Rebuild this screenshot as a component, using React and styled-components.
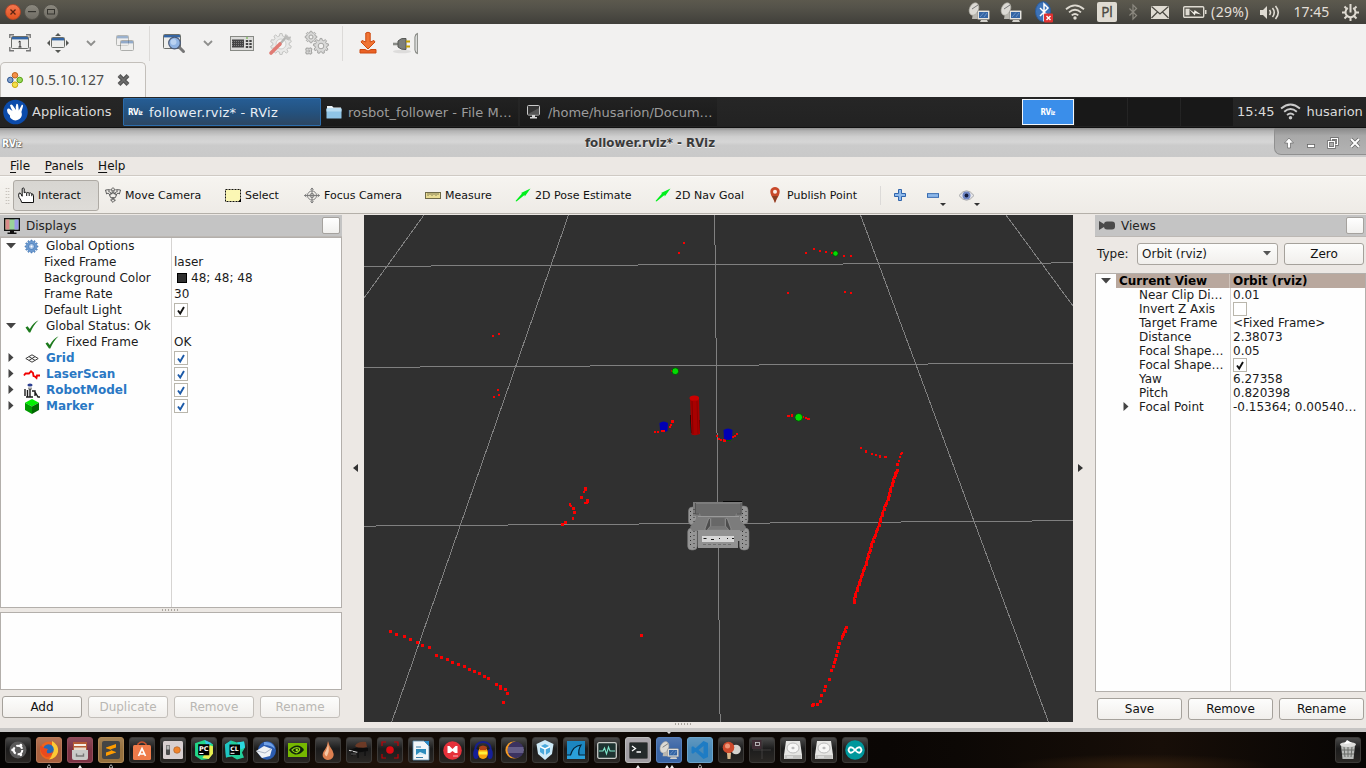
import React from 'react';
import styled, { createGlobalStyle, css } from 'styled-components';

const Global = createGlobalStyle`
  * { box-sizing: border-box; }
  html, body { margin: 0; padding: 0; background: #000; overflow: hidden; }
  body { font-family: "DejaVu Sans", "Liberation Sans", sans-serif; font-size: 12px; color: #1a1a1a; }
`;

const Screen = styled.div`
  width: 1366px; height: 768px; display: flex; flex-direction: column; overflow: hidden;
`;
const Icon = styled.svg`
  display: block; flex: none; overflow: visible;
`;
const Slot = styled.div`
  width: ${p => p.$w}px; height: 100%; flex: none; display: flex; align-items: center; justify-content: center;
`;

/* ---------- host system bar ---------- */
const SystemBar = styled.header`
  height: 24px; flex: none; display: flex; justify-content: space-between; overflow: hidden;
  background: linear-gradient(#5c594e 0, #55534a 30%, #403f3a 100%);
`;
const WindowDots = styled.div`
  display: flex; align-items: center; gap: 3px; padding: 0 0 1px 5px;
`;
const Dot = styled.span`
  width: 16px; height: 16px; border-radius: 50%; display: flex; align-items: center; justify-content: center;
  border: 1px solid ${p => (p.$close ? '#b3482a' : '#54524a')};
  background: ${p => (p.$close ? 'linear-gradient(#f4774f, #e2531f)' : 'linear-gradient(#8b887e, #6f6c64)')};
`;
const Tray = styled.div`
  display: flex; height: 24px; width: 403px; flex: none; font: 14px "Noto Sans", sans-serif; color: #e3dfd7;
`;
const TrayText = styled.span`
  letter-spacing: ${p => p.$ls || 0}px; white-space: nowrap; padding-bottom: 1px;
`;
const Layout = styled.span`
  width: 20px; height: 20px; border-radius: 2px; background: #dfdbd2; color: #4b4942;
  font: 13.5px/20px "Noto Sans", sans-serif; text-align: center; -webkit-text-stroke: 0.3px #4b4942;
`;

/* ---------- remote client chrome ---------- */
const ClientBar = styled.div`
  height: 38px; flex: none; display: flex; align-items: center; background: #f2f1f0; padding-left: 1px;
`;
const Rule = styled.span`
  width: 1px; height: ${p => p.$h || 35}px; background: #dcdad8; margin: 0 ${p => p.$r}px 0 ${p => p.$l}px; flex: none;
`;
const ClientTabs = styled.div`
  height: 35px; flex: none; background: #f2f1f0; display: flex;
`;
const ClientTab = styled.div`
  width: 146px; height: 35px; border: 1px solid #c3bfba; border-bottom: 0; border-radius: 5px 5px 0 0;
  background: #f5f4f3; display: flex; align-items: center; padding: 0 0 1px 6px;
  font: 14px "Noto Sans", sans-serif; color: #4c4c4c;
  span { width: 76px; margin: 0 13px 1px 5px; letter-spacing: 0.08px; }
`;

/* ---------- remote desktop panel ---------- */
const Panel = styled.div`
  height: 31px; flex: none; display: flex; align-items: center; background: linear-gradient(#262626, #222);
  font-size: 13px; color: #dadada; border-bottom: 1px solid #111;
`;
const Launcher = styled.div`
  display: flex; align-items: center; gap: 4px; width: 123px; padding: 0 0 2px 3px;
`;
const Task = styled.div`
  width: ${p => (p.$active ? 198 : 197)}px; height: 28px; display: flex; align-items: center; flex: none;
  padding-left: 5px; gap: 6px; margin-right: ${p => p.$mr || 0}px; white-space: nowrap;
  ${p => p.$active ? css`
    background: linear-gradient(#265d94, #24527f 50%, #2c4662); border: 1px solid #2b6cab; color: #e8eef4; border-radius: 1px;
    padding-left: 4px; letter-spacing: 0.19px;
  ` : css`background: linear-gradient(#222, #191919); color: #9c9c9c;`}
`;
const TaskLabel = styled.span`
  letter-spacing: ${p => p.$ls}px;
`;
const RvizMark = styled.span`
  font: bold ${p => p.$s || 8}px "DejaVu Sans Condensed", "DejaVu Sans", sans-serif; letter-spacing: -0.5px;
  color: #fff; width: ${p => p.$w || 15}px; flex: none; white-space: nowrap;
  text-shadow: ${p => (p.$outline ? '0 0 1px #555, 0 0 1px #666, 1px 1px 1px #777' : 'none')};
  small { font-size: 0.78em; }
`;
const Pager = styled.div`
  display: flex; height: 28px; margin-left: auto; align-items: center;
`;
const Workspace = styled.div`
  width: 52px; height: ${p => (p.$active ? 26 : 28)}px; margin-right: 1px; flex: none;
  display: flex; align-items: center; justify-content: center;
  background: ${p => (p.$active ? '#3a8eea' : '#181818')};
  border: ${p => (p.$active ? '1px solid #f2f6fa' : '0')};
`;
const PanelStatus = styled.div`
  width: 132px; display: flex; align-items: center; padding: 0 0 1px 3px; gap: 5.5px; flex: none;
`;

/* ---------- RViz window ---------- */
const TitleBar = styled.div`
  height: 29px; flex: none; display: flex; align-items: center;
  background: linear-gradient(#8f8f8f 0, #b3b3b3 10%, #cfcfcf 30%, #d6d6d6 48%, #cbcbcb 60%, #c9c9c9 100%);
  padding-left: 2px;
`;
const TitleText = styled.span`
  flex: 1; text-align: center; font-weight: bold; font-size: 11.85px; color: #3a3a3a; padding-left: 4px;
  text-shadow: 0 1px 0 #eee;
`;
const TitleButtons = styled.div`
  width: 92px; height: 27px; align-self: flex-start; border-radius: 0 0 0 7px; flex: none;
  border: 1px solid #909090; border-width: 0 0 1px 1px; background: linear-gradient(#888, #a9a9a9 30%, #b3b3b3);
  display: flex; align-items: center; padding: 4px 0 0 3px;
`;
const MenuBar = styled.div`
  height: 19px; flex: none; display: flex; align-items: center; gap: 14.7px; padding: 0 0 1px 10px; background: #ece8e4;
  border-bottom: 1px solid #cfcac4; color: #111;
  span::first-letter { text-decoration: underline; text-underline-offset: 2px; }
`;
const ToolBar = styled.div`
  height: 38px; flex: none; display: flex; align-items: center; background: linear-gradient(#f6f4f0, #eeebe6);
  border-bottom: 1px solid #b4b0a9; border-top: 1px solid #fbfaf8; font-size: 11px; color: #111;
`;
const Grip = styled.span`
  width: 5px; height: 17px; margin: 0 3px 0 5px; flex: none;
  background: radial-gradient(circle, #bdb8b1 35%, transparent 45%) 0 0 / 2.5px 3px;
`;
const Tool = styled.div`
  width: ${p => p.$w}px; height: 31px; display: flex; align-items: center; gap: 4px; flex: none; white-space: nowrap;
  padding-left: ${p => (p.$on ? 4 : 6)}px;
  ${p => p.$on && css`background: linear-gradient(#d7d5d1, #dedcd8); border: 1px solid #aeaaa4; border-radius: 3px;`}
`;
const Workarea = styled.div`
  height: 514px; flex: none; display: flex; background: #ece8e4; padding-top: 1px;
`;
const LeftDock = styled.section`
  width: 342px; flex: none; display: flex; flex-direction: column;
`;
const RightDock = styled.section`
  width: 271px; flex: none; display: flex; flex-direction: column;
`;
const DockHeader = styled.div`
  height: 22px; flex: none; background: #c4c4c4; display: flex; align-items: center; padding: 0 2px 0 4px;
  gap: 6px; color: #222; border-bottom: 1px solid #bcb8b4;
  i { margin-left: auto; width: 18px; height: 17px; border: 1px solid #a5a29e; border-radius: 2px; background: linear-gradient(#fff, #f1f0ee); }
`;
const Tree = styled.div`
  height: ${p => p.$h}px; flex: none; border: 1px solid #b3afab; display: flex; flex-direction: column;
  background: linear-gradient(#d6d4d2, #d6d4d2) ${p => p.$split}px 0 / 1px 100% no-repeat #fefefe;
`;
const Row = styled.div`
  height: ${p => p.$h}px; flex: none; display: flex; align-items: center;
  color: #1b1b1b; white-space: nowrap;
`;
const NameCell = styled.div`
  width: ${p => p.$w}px; height: 100%; display: flex; align-items: center; flex: none;
  padding-left: ${p => p.$indent || 0}px;
  font-weight: ${p => (p.$bold ? 'bold' : 'normal')}; color: ${p => p.$color || 'inherit'};
`;
const ValueCell = styled.div`
  display: flex; align-items: center; height: 100%; flex: 1; padding-left: 2px; gap: 4px;
`;
const Highlight = styled.div`
  flex: 1; height: 100%; display: flex; align-items: center; background: #b9a89e; color: #000; font-weight: bold;
  span { width: 114px; padding-left: 3px; border-right: 1px solid #cfc4bc; height: 100%; line-height: 14px; }
  b { padding-left: 3px; line-height: 14px; }
`;
const Box = styled.span`
  width: 14px; height: 14px; border: 1px solid #b9b6ac; background: #fff; display: flex; align-items: center; justify-content: center; flex: none;
`;
const Swatch = styled.span`
  width: 10px; height: 10px; background: #303030; border: 1px solid #000; margin-left: 3px;
`;
const SplitHandle = styled.div`
  height: 4px; flex: none; display: flex; justify-content: center; align-items: center;
  padding-right: ${p => p.$shift || 0}px;
  span { width: 18px; height: 2px; background: repeating-linear-gradient(90deg, #aaa69f 0 1px, transparent 1px 3px); }
`;
const HelpBox = styled.div`
  height: 78px; flex: none; background: #fefefe; border: 1px solid #b3afab;
`;
const Buttons = styled.div`
  display: flex; gap: 6px; padding: 6px 2px 0 2px;
`;
const Button = styled.div`
  flex: ${p => (p.$w ? 'none' : 1)}; width: ${p => (p.$w ? p.$w + 'px' : 'auto')}; height: 22px; border: 1px solid ${p => (p.$off ? '#c3bfba' : '#a5a19b')}; border-radius: 3px;
  background: linear-gradient(#fdfdfc, #f1efec); color: ${p => (p.$off ? '#b9b7b3' : '#111')};
  display: flex; align-items: center; justify-content: center; padding-bottom: 1px;
`;
const TypeRow = styled.div`
  display: flex; align-items: center; gap: 6px; height: 22px; margin: 6px 2px 8px 2px; flex: none;
  > span { width: 34px; }
`;
const Select = styled.div`
  width: 141px; height: 22px; border: 1px solid #a9a59f; border-radius: 3px; background: linear-gradient(#fdfdfc, #f1efec);
  display: flex; align-items: center; justify-content: space-between; padding: 0 6px 1px 4px;
`;
const Collapse = styled.div`
  width: 22px; flex: none; display: flex; align-items: center; justify-content: center;
  padding: 0 ${p => p.$r}px 7px ${p => p.$l}px;
`;
const Center = styled.main`
  width: 709px; flex: none; display: flex; flex-direction: column; overflow: hidden;
`;
const WindowEdge = styled.div`
  height: 4px; flex: none; background: #c6c5c4;
`;

/* ---------- host dock ---------- */
const HostDock = styled.footer`
  height: 36px; flex: none; display: flex; align-items: flex-start; padding: 0 0 0 5px; gap: 5px;
  background:
    radial-gradient(ellipse 130px 12px at 1140px 34px, #33200f, transparent),
    radial-gradient(ellipse 160px 16px at 420px 30px, #23150c, transparent),
    linear-gradient(90deg, #050403, #120b06 30%, #0a0604 65%, #0c0805 70%, #170e08 85%, #070504);
  > :last-child { margin-left: auto; margin-right: 5px; }
`;
const DockItem = styled.div`
  width: 26px; height: 36px; flex: none; display: flex; flex-direction: column; align-items: center;
`;
const Tile = styled.div`
  width: 26px; height: 26px; flex: none; border-radius: 3px; display: flex; align-items: center; justify-content: center;
  background: ${p => p.$c ? `linear-gradient(rgba(255,255,255,.12), transparent 50%), ${p.$c}` : 'linear-gradient(#4a4a4a, #1c1c1c 45%, #2a2724)'};
  border: 1px solid ${p => p.$b || '#3c3a38'};
`;
const Mark = styled.div`
  height: 5px; display: flex; gap: 1px; justify-content: center; align-items: ${p => (p.$top ? 'flex-start' : 'flex-end')};
`;

/* ---------- icons ---------- */
const Remote = ({ s = 22 }) => (
  <Icon width={s} height={s} viewBox="0 0 22 22">
    <path d="M5 12 L10 12 L12 18 L4 18 Z" fill="#b9b7b0" />
    <ellipse cx="6" cy="8" rx="4.5" ry="6.5" fill="#dcdad4" stroke="#aaa89f" strokeWidth=".6" transform="rotate(24 6 8)" />
    <path d="M4 8 L10 4" stroke="#777" />
    <rect x="9.5" y="9.5" width="12" height="9" rx="1" fill="#e6e4df" stroke="#8c8a84" strokeWidth=".6" />
    <rect x="11" y="11" width="9" height="6" fill="#3465a4" />
    <path d="M12 16 L16 11.5 M16 16 L19 12" stroke="#7fa3d3" strokeWidth=".7" />
    <path d="M13 19 h6 l1 2 h-8 z" fill="#d4d2cc" />
  </Icon>
);
const Wifi = ({ w = 20, c = '#dfdbd2' }) => (
  <Icon width={w} height={w * 0.8} viewBox="0 0 20 16" fill="none" stroke={c} strokeWidth="1.8">
    <path d="M1 5.2 Q10 -2.4 19 5.2" /><path d="M4 8.4 Q10 3.2 16 8.4" /><path d="M6.7 11.4 Q10 8.6 13.3 11.4" />
    <circle cx="10" cy="14" r="1.7" fill={c} stroke="none" />
  </Icon>
);
const BtPath = ({ c, w }) => <path d="M5 7 L13 15 L9 19 L9 3 L13 7 L5 15" fill="none" stroke={c} strokeWidth={w} />;
const Chevron = () => (
  <Icon width="10" height="6" viewBox="0 0 10 6"><path d="M1 1 L5 5 L9 1" fill="none" stroke="#8e8e8c" strokeWidth="1.8" /></Icon>
);
const Win = ({ x, y, w, h, o = 1 }) => (
  <g opacity={o}>
    <rect x={x + 0.5} y={y + 0.5} width={w - 1} height={h - 1} rx="1" fill="#eeeeec" stroke="#6b6e6a" />
    <rect x={x + 1} y={y + 1} width={w - 2} height="2.4" fill="#3465a4" />
  </g>
);
const gearPath = (cx, cy, r, n) => {
  let d = '';
  for (let i = 0; i < n; i++) {
    [[-0.3, 0.78], [-0.17, 1], [0.17, 1], [0.3, 0.78]].forEach(([a, k], j) => {
      const t = ((i + a) / n) * Math.PI * 2;
      d += `${i || j ? 'L' : 'M'}${(cx + Math.sin(t) * r * k).toFixed(2)} ${(cy - Math.cos(t) * r * k).toFixed(2)} `;
    });
  }
  return d + 'Z';
};
const Tri = ({ open }) => open
  ? <Icon width="10" height="6" viewBox="0 0 10 6"><path d="M0 0 H10 L5 5.5 Z" fill="#444" /></Icon>
  : <Icon width="6" height="10" viewBox="0 0 6 10"><path d="M.5 0 V9 L5.5 4.5 Z" fill="#444" /></Icon>;
const Check = ({ c }) => (
  <Box>{c && <Icon width="8" height="9" viewBox="0 0 8 9"><path d="M1 4.5 L3.2 7.5 L7 1" fill="none" stroke={c} strokeWidth="1.9" /></Icon>}</Box>
);
const Tick = () => (
  <Icon width="14" height="13" viewBox="0 0 14 13"><path d="M0.5 7.5 L2.5 6.2 L4.8 9 Q8 3 13.5 0.3 Q8.5 5 5.3 12.6 L4 12.6 Z" fill="#1d7a1d" /></Icon>
);
const Pose = () => (
  <Icon width="16" height="14" viewBox="0 0 16 14"><path d="M0.5 13 L7 5.5 L6 5 L15.5 .5 L9.8 8.5 L9.5 7 L1.5 13.6 Z" fill="#00ef1c" /></Icon>
);
const Disk = () => (
  <Icon width="20" height="20" viewBox="0 0 20 20">
    <path d="M3 1 H17 L19 15 V19 H1 V15 Z" fill="#e6e6e4" /><path d="M1.5 15 H18.5 V19 H1.5Z" fill="#c4c4c2" />
    <ellipse cx="10" cy="8" rx="6" ry="5" fill="#f7f7f6" stroke="#bbb" /><ellipse cx="10" cy="8" rx="1.6" ry="1.2" fill="#bbb" /><path d="M4 17h6" stroke="#eee" />
  </Icon>
);

/* ---------- 3D scene ---------- */
const dot3 = [
  [390, 631], [396, 634], [404, 636], [410, 639], [417, 642], [422, 645], [429, 647], [436, 655], [441, 657], [447, 659],
  [452, 662], [458, 664], [464, 666], [469, 669], [474, 671], [479, 673], [484, 676], [488, 678], [496, 684], [500, 686],
  [500, 688], [505, 689], [507, 693], [503, 702], [641, 635], [897, 470], [897, 464], [839, 643], [838, 647], [837, 651], [836, 655],
  [835, 659], [834, 662], [833, 666], [831, 670], [829, 679], [825, 686], [824, 690], [821, 695], [820, 701], [817, 704],
  [813, 704], [812, 705], [585, 488], [585, 489], [581, 497], [587, 500], [587, 501], [573, 508], [574, 512], [565, 522],
  [562, 524], [672, 421], [724, 440],
];
const dot2 = [
  [902, 453], [901, 454], [900, 457], [899, 461], [861, 448], [866, 451], [866, 452], [872, 454], [876, 455], [880, 456], [880, 457],
  [885, 457], [886, 457], [806, 253], [814, 249], [820, 251], [826, 252], [844, 256], [851, 256], [788, 293], [845, 292], [851, 293],
  [788, 416], [789, 416], [792, 415], [792, 416], [803, 417], [806, 418], [808, 419], [809, 419], [684, 243], [679, 253], [493, 336], [499, 334],
  [498, 390], [494, 397], [499, 395], [655, 432], [658, 432], [662, 431], [664, 430], [670, 427], [671, 425], [717, 436],
  [719, 439], [721, 440], [733, 437], [735, 436], [737, 434], [584, 492], [573, 518], [573, 519], [672, 371], [678, 371],
  [832, 253], [585, 503], [587, 503], [570, 504], [570, 505], [571, 506],
];
const wall = [[[896.5, 472], [892, 485], [888, 499], [884, 509], [879, 525], [873, 541], [866, 564], [859, 584], [855, 596], [854, 602]], [[846, 627], [845, 631], [842, 638]]];
const wallDots = wall.flatMap(line => line.slice(1).flatMap(([x2, y2], i) => {
  const [x1, y1] = line[i];
  const n = Math.ceil((y2 - y1) / 2);
  return Array.from({ length: n + 1 }, (_, k) => [Math.floor(x1 + ((x2 - x1) * k) / n), Math.floor(y1 + ((y2 - y1) * k) / n), k % 3 === 1 ? 2 : 3]);
}));
const gridLines = [
  [364, 266.33, 1073, 262.9], [364, 367.34, 1073, 363.15], [364, 526.1, 1073, 520.7], [714.7, 215, 720.1, 722],
  [568.5, 215, 391.7, 722], [424, 215, 364, 298], [860.5, 215, 1048.5, 722], [1006, 215, 1073, 306],
];
const Scene = () => (
  <Icon width="709" height="507" viewBox="364 215 709 507">
    <rect x="364" y="215" width="709" height="507" fill="#303030" />
    <g stroke="#808080" strokeWidth="1" shapeRendering="crispEdges">
      {gridLines.map(([a, b, c, d], i) => <line key={i} x1={a} y1={b} x2={c} y2={d} />)}
    </g>
    <g fill="#fb0000" shapeRendering="crispEdges">
      {dot3.map(([x, y], i) => <rect key={i} x={x - 1} y={y - 1} width="3" height="3" />)}
      {wallDots.map(([x, y, w], i) => <rect key={i} x={x - 1} y={y - 1} width={w} height="3" />)}
      {dot2.map(([x, y], i) => <rect key={i} x={x - 1} y={y - 1} width="2" height="2" />)}
    </g>
    <path d="M690 415 h2 v18 h-1z M699 420 h1 v14 h-1z" fill="#150000" />
    <path d="M690 398 H699 L700 434 Q695.5 436 691.5 434.5 Z" fill="#a90000" />
    <path d="M692 401 L693 434" stroke="#840000" strokeWidth="1" />
    <path d="M697 401 L698 434" stroke="#900000" strokeWidth="1" />
    <ellipse cx="694.3" cy="398" rx="4.8" ry="2.6" fill="#cc0000" />
    <path d="M659.5 423 Q663.5 420 668 423 L667.5 431 Q664 433 660 430 Z" fill="#0000b4" />
    <path d="M723.5 430 Q728 427 732.5 430 L732 439 Q728 441 724 439 Z" fill="#0000b4" />
    <path d="M726 440.5 h5" stroke="#006000" /><rect x="661" y="430" width="4" height="2" fill="#fb0000" />
    <g fill="#02dc02" stroke="#064006" strokeWidth=".8">
      <circle cx="675.3" cy="371.2" r="3.4" /><circle cx="798.7" cy="417.3" r="3.9" /><circle cx="835.5" cy="253.5" r="2.7" />
    </g>
    <g>
      <g fill="#969696" stroke="#7b7b7b" strokeWidth=".6">
        <rect x="688.5" y="507" width="9" height="18" rx="4" /><rect x="739" y="506" width="9" height="18" rx="4" />
        <rect x="687.7" y="528" width="9.5" height="22" rx="4" /><rect x="739.5" y="528" width="9.5" height="22" rx="4" />
      </g>
      <path d="M723 501.5 H742" stroke="#080808" />
      <path d="M693 502 H742.3 V516 H740 V520 L746 527 L744 531 H692 L690 527 L696 519 V516 H693 Z" fill="#7c7c7c" />
      <path d="M696 504 H740.5 V513.5 H736 L735 516 H701 L700 513.5 H696 Z" fill="#6b6b6b" />
      <path d="M695.5 503 V514 H699 M741 503 V514 H737" fill="none" stroke="#4a4a4a" strokeWidth=".8" />
      <path d="M698 516.5 H739" stroke="#a2a2a2" strokeWidth=".8" />
      <path d="M710 517 H726 L729 529 H707 Z" fill="#777" />
      <path d="M709 518 L710.5 519 V526 L706 531.5 L705 529 Z M727 518 L725.5 519 V526 L730 531.5 L731 529 Z" fill="#4d4d4d" stroke="#a0a0a0" strokeWidth=".6" />
      <rect x="711.5" y="518" width="13" height="8" fill="#686868" />
      <path d="M698 530 H740 V541 H738 V548 H698 Z" fill="#929292" />
      <rect x="702" y="536" width="32" height="6" fill="#d6d6d6" />
      <path d="M703.5 538.5h3 M711 539.5h3 M719 538.5h1 M727 538.5h1 M732 538.5h2" stroke="#1c1c1c" />
      <path d="M703 544.5 H733" stroke="#6e6e6e" strokeDasharray="3 2" />
      <path d="M690.5 511v12 M694 509v14 M742.5 509v14 M746 511v10 M690.5 532v16 M694 531v18 M742.5 531v18 M746 532v16" stroke="#2e2e2e" strokeDasharray="1 3" />
    </g>
  </Icon>
);

/* ---------- data ---------- */
const displayRows = [
  { tri: 'open', icon: 'gear', name: 'Global Options' },
  { indent: 43, name: 'Fixed Frame', value: 'laser' },
  { indent: 43, name: 'Background Color', value: '48; 48; 48', swatch: true },
  { indent: 43, name: 'Frame Rate', value: '30' },
  { indent: 43, name: 'Default Light', check: '#111' },
  { tri: 'open', icon: 'tick', name: 'Global Status: Ok' },
  { indent: 44, icon: 'tick', name: 'Fixed Frame', value: 'OK' },
  { tri: 'shut', icon: 'grid', name: 'Grid', link: true, check: '#1c5aa8' },
  { tri: 'shut', icon: 'laser', name: 'LaserScan', link: true, check: '#1c5aa8' },
  { tri: 'shut', icon: 'robot', name: 'RobotModel', link: true, check: '#1c5aa8' },
  { tri: 'shut', icon: 'marker', name: 'Marker', link: true, check: '#1c5aa8' },
];
const viewRows = [
  ['Near Clip Di…', '0.01'], ['Invert Z Axis', { check: null }], ['Target Frame', '<Fixed Frame>'], ['Distance', '2.38073'],
  ['Focal Shape…', '0.05'], ['Focal Shape…', { check: '#111' }], ['Yaw', '6.27358'], ['Pitch', '0.820398'],
  ['Focal Point', '-0.15364; 0.00540…', true],
];
const rowIcons = {
  gear: <Icon width="13" height="13" viewBox="0 0 13 13"><path d={gearPath(6.5, 6.5, 6.5, 12)} fill="#6c9bd2" stroke="#3a6fae" strokeWidth=".6" /><circle cx="6.5" cy="6.5" r="3" fill="#a9c5e8" stroke="#3a6fae" strokeWidth=".7" /><circle cx="6.5" cy="6.5" r="1" fill="#fff" /></Icon>,
  tick: <Tick />,
  grid: <Icon width="14" height="9" viewBox="0 0 14 9" fill="none" stroke="#3c3c3c"><path d="M.8 4.5 L7 .8 L13.2 4.5 L7 8.2 Z M3.9 2.6 L10.1 6.4 M10.1 2.6 L3.9 6.4" /></Icon>,
  laser: <Icon width="16" height="9" viewBox="0 0 16 9"><path d="M0 5.5 L1.5 3.5 H5 L7 1.2 L9 3 L9.5 6 L11 6.5 L12.5 8 L13 5.5 H16" fill="none" stroke="#f00000" strokeWidth="1.8" /></Icon>,
  robot: <Icon width="16" height="15" viewBox="0 0 16 15"><ellipse cx="6" cy="2" rx="2.6" ry="1.5" fill="#2c3f8f" /><path d="M4 4.5 h4 v2 h-4z" fill="#9a9a9a" /><path d="M1 6 V13 M3.5 7 V14 M6 6 V14 M8 8 H11 V13 M11 9 L14 14 H16 M2 14 H9" fill="none" stroke="#1c1c1c" strokeWidth="1.4" /></Icon>,
  marker: <Icon width="14" height="15" viewBox="0 0 14 15"><path d="M7 0 L14 3.8 L7 7.6 L0 3.8Z" fill="#00f000" /><path d="M0 3.8 L7 7.6 V15 L0 11Z" fill="#009a00" /><path d="M14 3.8 L7 7.6 V15 L14 11Z" fill="#006800" /></Icon>,
};

const DisplayRow = ({ r }) => (
  <Row $h={16}>
    <NameCell $w={171} $indent={r.indent} $bold={r.link} $color={r.link ? '#2a78c4' : undefined}>
      {r.tri && <Slot $w={19}><Tri open={r.tri === 'open'} /></Slot>}
      {r.icon && <Slot $w={r.tri ? 23 : 14}>{rowIcons[r.icon]}</Slot>}
      {r.icon && <Slot $w={r.tri ? 3 : 7} />}
      {r.name}
    </NameCell>
    <ValueCell>
      {r.swatch && <Swatch />}
      {r.check && <Check c={r.check} />}
      {r.value}
    </ValueCell>
  </Row>
);

const MoveIcon = () => (
  <Icon width="16" height="16" viewBox="0 0 16 16" fill="none" stroke="#4d4d4d" strokeWidth=".9">
    <path d="M8 .6 L10.4 3 H8.8 V6 M8 .6 L5.6 3 H7.2 V6 M8 15.4 L10.4 13 H8.8 V10 M8 15.4 L5.6 13 H7.2 V10" />
    <path d="M.5 3 L4.5 2.6 L3.6 4.4 Q6 5 6.6 7.4 M.5 3 L1.6 7 L3 6 Q4.5 6.5 4.8 8.6 M15.5 3 L11.5 2.6 L12.4 4.4 Q10 5 9.4 7.4 M15.5 3 L14.4 7 L13 6 Q11.5 6.5 11.2 8.6" />
    <ellipse cx="8" cy="8.6" rx="3.2" ry="2.6" />
  </Icon>
);
const tools = [
  ['Interact', 86, <Icon width="16" height="17" viewBox="0 0 16 17"><path d="M4.2 9 V1.6 Q5.2 .2 6.2 1.6 V5.8 Q7.3 4.6 8.6 6 Q9.9 4.9 11.1 6.2 Q12.5 5.3 13.8 6.8 Q15.5 6.8 15.5 8.8 V15.5 H3.7 Q3.2 13 1 10.4 Q.1 8.2 1.2 6 Q2.4 5.8 3 7 L4.2 9.5 M8.7 6.2 V9 M11.2 6.5 V9 M13.8 7 V9.2" fill="#fff" stroke="#111" strokeWidth="1" /></Icon>, true],
  ['Move Camera', 120, <MoveIcon />],
  ['Select', 79, <Icon width="16" height="14" viewBox="0 0 16 14"><rect x=".5" y="1.5" width="15" height="12" fill="#fbf7b4" stroke="#111" strokeDasharray="2 1" /><path d="M13 14 H16 V10.5 Z" fill="#000" /></Icon>],
  ['Focus Camera', 121, <Icon width="16" height="17" viewBox="0 0 17 17" fill="none" stroke="#777" strokeWidth="1"><circle cx="8.5" cy="8.5" r="4.8" /><circle cx="8.5" cy="8.5" r="2.2" /><path d="M8.5 .5 V16.5 M.5 8.5 H16.5 M7 2.5 L8.5 .5 L10 2.5 M7 14.5 L8.5 16.5 L10 14.5 M2.5 7 L.5 8.5 L2.5 10 M14.5 7 L16.5 8.5 L14.5 10" /></Icon>],
  ['Measure', 90, <Icon width="16" height="7" viewBox="0 0 16 7"><rect x=".5" y=".5" width="15" height="6" fill="#e9dc94" stroke="#6f6a48" /><path d="M3 1v3M5 1v2M7 1v3M9 1v2M11 1v3M13 1v2" stroke="#6f6a48" strokeWidth=".8" /></Icon>],
  ['2D Pose Estimate', 140, <Pose />],
  ['2D Nav Goal', 112, <Pose />],
  ['Publish Point', 118, <Icon width="16" height="16" viewBox="0 0 16 16"><path d="M8 16 Q6.5 12 4.2 8.5 Q2 3 5 1 Q8 -1 11 1 Q14 3 11.8 8.5 Q9.5 12 8 16Z" fill="#c8492a" /><path d="M8 16 Q7 12 5 9 L11 9 Q9 12 8 16Z" fill="#6b3a22" opacity=".7" /><circle cx="8" cy="4.8" r="2" fill="#fbeee8" /></Icon>],
];
const DropMark = () => <Icon width="6" height="3" viewBox="0 0 6 3"><path d="M0 0H6L3 3Z" fill="#333" /></Icon>;
const WithDrop = styled.div`
  width: ${p => p.$w}px; display: flex; align-items: center;
  > :last-child { margin: 19px 0 0 ${p => p.$d}px; }
`;

const circleMark = <Icon width="4" height="4" viewBox="0 0 4 4"><path d="M2 .6 L3.4 2.4 V4 H.6 V2.4Z" fill="none" stroke="#ddd" strokeWidth=".8" /></Icon>;
const solidMark = <Icon width="4" height="3" viewBox="0 0 4 3"><path d="M2 0 L4 3 H0Z" fill="#eee" /></Icon>;

const dockIcons = [
  [<Icon width="18" height="18" viewBox="0 0 18 18"><circle cx="9" cy="9" r="8.5" fill="#5a5a5a" /><circle cx="9" cy="9" r="4.3" fill="none" stroke="#fff" strokeWidth="2" strokeDasharray="7 2" /><circle cx="3.6" cy="9" r="1.4" fill="#fff" /><circle cx="11.8" cy="4.2" r="1.4" fill="#fff" /><circle cx="11.8" cy="13.8" r="1.4" fill="#fff" /></Icon>],
  [<Icon width="20" height="20" viewBox="0 0 20 20"><circle cx="10" cy="10.5" r="9" fill="#f0631b" /><path d="M13 1 Q20 5 19 12 Q17 19 10 19.5 Q15 15 13 8Z" fill="#fcca35" /><circle cx="9.5" cy="9.5" r="5.3" fill="#2569b8" /><path d="M1 6 Q4 6 5 8 L9 9 Q7 11 8 13 Q12 14 14 11 Q13 17 7 17 Q1 14 1 6Z" fill="#ea4a1f" /></Icon>, '#a9613f', '#b77a5a', circleMark],
  [<Icon width="18" height="19" viewBox="0 0 18 19"><path d="M2 1 H16 V9 H2Z" fill="#b55c35" /><path d="M3 3 H15 V5 H3Z" fill="#f5efe4" /><path d="M3 6.5 H15 V9 H3Z" fill="#e8dccb" /><path d="M1 9 H17 V17 Q17 19 15 19 H3 Q1 19 1 17Z" fill="#c9c9c7" /><path d="M5.5 12.5 V15 H12.5 V12.5" fill="none" stroke="#777" strokeWidth="1.4" /></Icon>, '#7d3344', '#914c5b', solidMark],
  [<Icon width="18" height="18" viewBox="0 0 18 18"><rect width="18" height="18" rx="2" fill="#454545" /><path d="M4 6.5 L14 3 V6.5 L7.5 8.8 L14 11 V11.5 L4 15 V11.5 L10.5 9.3 L4 7.2Z" fill="#ff9c00" /></Icon>, '#97713e', '#ae8856', circleMark],
  [<Icon width="18" height="19" viewBox="0 0 18 19"><path d="M5 5 V3 Q9 -1 13 3 V5" fill="none" stroke="#c9522c" strokeWidth="1.5" /><rect y="4" width="18" height="15" rx="1.5" fill="#ef7b4a" /><path d="M5.5 15 L9 7.5 L12.5 15 M7 13 H11" fill="none" stroke="#fff" strokeWidth="1.7" /></Icon>],
  [<Icon width="20" height="18" viewBox="0 0 20 18"><rect width="20" height="18" rx="1.5" fill="#d8cfd0" /><rect x="3" y="4" width="4" height="10" rx="1" fill="#4a4a4a" /><rect x="3.5" y="4.5" width="3" height="4" fill="#b8b8b8" /><circle cx="14" cy="9" r="3.3" fill="#f0822a" stroke="#9c5a2a" strokeWidth=".6" /></Icon>],
  [<Icon width="20" height="20" viewBox="0 0 19 19"><path d="M1 3 L10 0 L18 4 L18 12 L14 18 L7 19 L1 15Z" fill="#21d789" /><path d="M10 0 L17 3 L12 6Z" fill="#35c8e8" /><path d="M15 5 L18 6 V13 L14 18 L8 17Z" fill="#e9ef50" /><rect x="4" y="4" width="10.5" height="10.5" fill="#000" /><text x="4.7" y="10" fill="#fff" fontSize="6.2" fontWeight="bold" fontFamily="DejaVu Sans">PC</text><path d="M5 12.8h4" stroke="#fff" /></Icon>],
  [<Icon width="20" height="20" viewBox="0 0 20 19"><path d="M0 4 L6 0 L12 2 L19 1 L20 7 L17 12 L19 17 L12 19 L7 16 L1 17Z" fill="#23cf9b" /><path d="M0 4 L6 0 L7 14 L1 17Z" fill="#1fc4c4" /><path d="M12 2 L19 1 L20 7 L16 9Z" fill="#2bd8e0" /><rect x="4.5" y="4" width="10.5" height="10.5" fill="#000" /><text x="5.2" y="10" fill="#fff" fontSize="6.2" fontWeight="bold" fontFamily="DejaVu Sans">CL</text><path d="M5.5 12.8h4" stroke="#fff" /></Icon>],
  [<Icon width="20" height="19" viewBox="0 0 20 19"><ellipse cx="11" cy="9.5" rx="9" ry="9.3" fill="#2b5cb0" /><path d="M0 10 L8 5 L16 8 L14 15 L6 17Z" fill="#eef1f5" /><path d="M1 10 L9 12 L15 8" fill="none" stroke="#aab4c4" /><path d="M8 1 Q17 0 19 8 Q15 4 8 4Z" fill="#6fa0e6" /></Icon>],
  [<Icon width="19" height="14" viewBox="0 0 19 14"><rect width="19" height="14" fill="#76b900" /><path d="M1 7 Q5 2 10 2.5 Q14 3 16 7 Q12 12 7 11.5 Q3 10.5 1 7Z" fill="#10250a" /><path d="M4 7 Q7 3.5 11 5 Q13 7 9 9.5 Q6 10 4 7Z" fill="none" stroke="#8fd014" strokeWidth="1.3" /><circle cx="8.8" cy="7" r="1.2" fill="#9be020" /></Icon>],
  [<Icon width="12" height="19" viewBox="0 0 12 19"><path d="M6 0 Q7 5 10.5 9.5 Q13.5 16 8.5 18.5 Q3 20 .8 15.5 Q0 12 3 8.5 Q5.5 5 6 0Z" fill="#dd8050" /><path d="M6 3 Q5 9 2.5 12 Q3 16 5 15 Q8 10 6 3Z" fill="#f6c7a4" /></Icon>],
  [<Icon width="20" height="18" viewBox="0 0 20 18"><path d="M6 5 Q9 0 17 1 L18 6 Q12 8 9 7Z" fill="#6c3a26" /><path d="M0 9 L8 6.5 L19 7 V10 L9 11.5Z" fill="#0c0c0c" /><path d="M0 9.3 L9 11.5" stroke="#ddd" /><path d="M3 10 V15 M9 11 V17 M16 10 V15" stroke="#111" strokeWidth="1.4" /><path d="M2 13 h5" stroke="#555" /></Icon>],
  [<Icon width="18" height="18" viewBox="0 0 18 18"><path d="M1 5 V1 H5 M13 1 H17 V5 M17 13 V17 H13 M5 17 H1 V13" fill="none" stroke="#c00008" strokeWidth="1.2" /><circle cx="9" cy="9" r="3.8" fill="#dd0a12" /></Icon>],
  [<Icon width="16" height="19" viewBox="0 0 16 19"><path d="M0 0 H11 L16 5 V19 H0Z" fill="#f2f6f8" stroke="#5e8fae" strokeWidth=".8" /><path d="M11 0 H16 V5Z" fill="#2a8ccb" /><path d="M3 6 H8 M3 16.5 H10" stroke="#3a7fa8" /><rect x="3" y="8" width="10" height="6" fill="#2c8cbc" /><path d="M3 14 L7 11 L13 13.5 V14Z" fill="#d8eef8" /></Icon>],
  [<Icon width="19" height="19" viewBox="0 0 19 19"><circle cx="9.5" cy="9.5" r="9.3" fill="#e6303a" /><path d="M4.5 12 V5 H6.5 L9.5 8 L12.5 5 H14.5 V12 H12 L9.5 10 L7 12Z" fill="#fff" /><path d="M10 15h5" stroke="#f7b3b6" /></Icon>],
  [<Icon width="20" height="19" viewBox="0 0 20 19"><path d="M2 11 Q2 1 10 1 Q18 1 18 11" fill="none" stroke="#17208c" strokeWidth="2" /><ellipse cx="3" cy="13" rx="2.8" ry="5" fill="#161f98" /><ellipse cx="17" cy="13" rx="2.8" ry="5" fill="#161f98" /><ellipse cx="10" cy="12" rx="5" ry="6" fill="#f7a30c" /><path d="M6 12 H14" stroke="#fff03a" strokeWidth="3" /><path d="M6 6 Q10 3 14 6 L13 9 H7Z" fill="#b04018" /></Icon>],
  [<Icon width="19" height="18" viewBox="0 0 19 18"><circle cx="9" cy="9" r="8.6" fill="#f39a28" /><circle cx="10.7" cy="9" r="8.2" fill="#3b3260" /><path d="M3 7h15.5M2.5 9h16.5M3 11h15.5" stroke="#8f8ab0" strokeWidth="1.2" /></Icon>],
  [<Icon width="20" height="20" viewBox="0 0 20 20"><path d="M10 0 L18.5 4 L17 14 L10 20 L3 14 L1.5 4Z" fill="#cdeaf8" /><path d="M10 4 L15 6.5 V12 L10 15.5 L5 12 V6.5Z" fill="#4aa9dc" /><path d="M5 6.5 L10 9 L15 6.5 M10 9 V15.5" fill="none" stroke="#fff" strokeWidth="1.4" /></Icon>],
  [<Icon width="18" height="18" viewBox="0 0 18 18"><rect width="18" height="18" fill="#1c86c0" /><path d="M0 14 H3 Q6 5 14 4 Q10 9 12 14 H18 V18 H0Z" fill="#2aa0da" /><path d="M0 14 H3.5 Q6 5 14 4 Q11 9 12 14 H18" fill="none" stroke="#052236" strokeWidth="1.2" /></Icon>],
  [<Icon width="20" height="17" viewBox="0 0 20 17"><rect x=".7" y=".7" width="18.6" height="15.6" rx="1.5" fill="#1e3331" stroke="#c9cbc8" strokeWidth="1.3" /><path d="M2 9 H6 L7.5 6 L9.5 12 L11.5 5 L13 9 H18" fill="none" stroke="#7ee8cb" strokeWidth="1.1" /></Icon>],
  [<Icon width="19" height="17" viewBox="0 0 19 17"><rect x=".5" y=".5" width="18" height="16" rx="1" fill="#242a2a" stroke="#555" /><path d="M3 4 L6.5 6.5 L3 9 M7.5 10 H12" fill="none" stroke="#fff" strokeWidth="1.3" /></Icon>, '#a19da2', '#bbb', solidMark],
  [<Remote s={20} />, '#3a65a5', '#567fba', <>{solidMark}{solidMark}</>, <Icon width="4" height="2" viewBox="0 0 4 2"><path d="M0 0H4L2 2Z" fill="#ddd" /></Icon>],
  [<Icon width="18" height="18" viewBox="0 0 18 18"><path d="M12.5 0 L17 2 V16 L12.5 18 L4.5 10.8 L2 12.8 L.5 12 V6 L2 5.2 L4.5 7.2Z M12.5 5 L7.5 9 L12.5 13Z" fill="#1e7cc4" fillRule="evenodd" /></Icon>, '#4a8ab8', '#6ba3c9', circleMark],
  [<Icon width="19" height="19" viewBox="0 0 19 19"><circle cx="14" cy="8.5" r="4.8" fill="#d5d3ce" /><circle cx="6.5" cy="6.5" r="5.8" fill="#cd4a2c" /><circle cx="5.5" cy="5" r="2.5" fill="#ee9476" /><path d="M5 12 H9 L8.5 18 H5.5Z" fill="#d8b78c" /></Icon>],
  [<Icon width="22" height="22" viewBox="0 0 22 22"><path d="M11 2 V20 M2 11 H20" stroke="#4e4a4c" strokeWidth=".7" /><rect x="1" y="1" width="9.5" height="9" fill="#3f2c34" /><rect x="4.5" y="3.5" width="4" height="3" fill="none" stroke="#ccc" strokeWidth=".8" /></Icon>],
  [<Disk />], [<Disk />],
  [<Icon width="20" height="20" viewBox="0 0 20 20"><circle cx="10" cy="10" r="9.8" fill="#00979c" /><path d="M10 10 Q5 4.5 3.5 10 Q5 15.5 10 10 Q15 4.5 16.5 10 Q15 15.5 10 10Z" fill="none" stroke="#fff" strokeWidth="1.8" /></Icon>],
  [<Icon width="18" height="20" viewBox="0 0 18 20"><path d="M2 5 H16 L14.5 19 H3.5Z" fill="#b9bbb8" /><path d="M5 7l1 10M9 7v10M13 7l-1 10M3 10h12M3 14h12" stroke="#6a6c69" /><ellipse cx="9" cy="4.5" rx="8" ry="2.5" fill="#dededc" /><path d="M5 4 L8 0 L13 3Z" fill="#fff" /></Icon>],
];

const RvizLogo = props => <RvizMark {...props}>RV<small>iz</small></RvizMark>;

export default function App() {
  return (
    <Screen>
      <Global />
      <SystemBar>
        <WindowDots>
          <Dot $close><Icon width="6" height="6" viewBox="0 0 6 6"><path d="M.5 .5 L5.5 5.5 M5.5 .5 L.5 5.5" stroke="#5a2413" strokeWidth="1.3" /></Icon></Dot>
          <Dot><Icon width="8" height="2"><rect width="8" height="1.2" fill="#35342f" /></Icon></Dot>
          <Dot><Icon width="8" height="6"><rect x=".5" y=".5" width="7" height="4.5" fill="none" stroke="#35342f" /></Icon></Dot>
        </WindowDots>
        <Tray>
          <Slot $w={32}><Remote /></Slot>
          <Slot $w={32}><Remote /></Slot>
          <Slot $w={34}><Icon width="18" height="22" viewBox="0 0 18 22"><ellipse cx="8" cy="10.5" rx="7.5" ry="9.8" fill="#3d73b9" stroke="#2a5a9a" /><BtPath c="#fff" w={1.5} /><rect x="9" y="12.5" width="9" height="9" rx="1" fill="#e03131" /><path d="M11.5 15 l4 4 m0 -4 l-4 4" stroke="#fff" strokeWidth="1.4" /></Icon></Slot>
          <Slot $w={28}><Wifi /></Slot>
          <Slot $w={36}><Layout>Pl</Layout></Slot>
          <Slot $w={16}><Icon width="16" height="20" viewBox="0 0 18 22"><BtPath c="#8b887f" w={1.4} /></Icon></Slot>
          <Slot $w={38}><Icon width="18" height="13" viewBox="0 0 18 13"><rect width="18" height="13" fill="#dfdbd2" /><path d="M.5 .5 L9 8 L17.5 .5 M.5 12 L6.5 6 M17.5 12 L11.5 6" fill="none" stroke="#4b4942" strokeWidth="1.2" /></Icon></Slot>
          <Slot $w={32}><Icon width="24" height="12" viewBox="0 0 24 12"><rect x=".7" y=".7" width="20" height="10.6" rx="1" fill="none" stroke="#dfdbd2" strokeWidth="1.4" /><path d="M22 4 h1.5 v4 H22z" fill="#dfdbd2" /><rect x="2.5" y="2.7" width="4" height="6.6" fill="#dfdbd2" /><path d="M6 3 L11 6.5 L11.5 4 L18 8.5 L12.5 7.3 L11.8 9.5Z" fill="#f2efe8" /></Icon></Slot>
          <Slot $w={38}><TrayText $ls={0.35}>(29%)</TrayText></Slot>
          <Slot $w={42}><Icon width="20" height="15" viewBox="0 0 20 15"><path d="M0 5 H3 L7 1 V14 L3 10 H0Z" fill="#dfdbd2" /><path d="M9.5 5 Q11.5 7.5 9.5 10 M12.5 3 Q16 7.5 12.5 12 M15.5 1 Q21 7.5 15.5 14" fill="none" stroke="#dfdbd2" strokeWidth="1.6" /></Icon></Slot>
          <Slot $w={41}><TrayText>17:45</TrayText></Slot>
          <Slot $w={36}><Icon width="17" height="17" viewBox="0 0 17 17" fill="none" stroke="#dfdbd2" strokeWidth="2"><path d="M5.8 4 A5 5 0 1 0 11.2 4" /><path d="M8.5 0 V8.5" /><path d="M8.5 13.5 V17 M0 8.5 H3.5 M13.5 8.5 H17 M2.5 14.5 L5 12 M14.5 14.5 L12 12 M2.5 2.5 L4.6 4.6 M14.5 2.5 L12.4 4.6" /></Icon></Slot>
        </Tray>
      </SystemBar>

      <ClientBar>
        <Slot $w={38}><Icon width="22" height="18" viewBox="0 0 22 18"><path d="M.8 4 V.8 H5 M17 .8 H21.2 V4 M21.2 13 V16.7 H17 M5 16.7 H.8 V13" fill="none" stroke="#777" strokeWidth="1.4" /><Win x={2} y={2} w={18} h={13} /><path d="M9.5 8 L11 7 V13 M9.5 13 H12.5" fill="none" stroke="#222" /></Icon></Slot>
        <Slot $w={38}><Icon width="22" height="20" viewBox="0 0 22 20"><Win x={4} y={4} w={14} h={11} /><path d="M8 3 L11 0 L14 3Z M8 17 L11 20 L14 17Z M3 7 L0 10 L3 13Z M19 7 L22 10 L19 13Z" fill="#555753" /></Icon></Slot>
        <Slot $w={28}><Chevron /></Slot>
        <Slot $w={40}><Icon width="18" height="17" viewBox="0 0 18 17"><Win x={0} y={0} w={13} h={11} o={0.45} /><Win x={4} y={5} w={14} h={11} o={0.5} /></Icon></Slot>
        <Rule $l={4} $r={5} />
        <Slot $w={38}><Icon width="22" height="19" viewBox="0 0 22 19"><Win x={0} y={0} w={18} h={15} /><path d="M15.5 12.5 L20.5 17.5" stroke="#777" strokeWidth="3" strokeLinecap="round" /><circle cx="11.5" cy="9" r="5.8" fill="#8fb3e3" stroke="#4a5a78" strokeWidth="1.2" /><circle cx="10.5" cy="8" r="3" fill="#b9d2f2" /></Icon></Slot>
        <Slot $w={30}><Chevron /></Slot>
        <Slot $w={38}><Icon width="24" height="15" viewBox="0 0 24 15"><rect x=".5" y=".5" width="23" height="14" fill="#dcdcda" stroke="#888a85" /><rect x="2" y="3.5" width="12" height="8" fill="#444" /><path d="M2 5.5h12M2 7.5h12M2 9.5h12" stroke="#9a9a98" strokeWidth=".7" strokeDasharray="1 1" /><path d="M17 4v8M20.5 4v8" stroke="#444" strokeWidth="2.4" strokeDasharray="2 1" /><path d="M16 2h2" stroke="#5ab02a" /></Icon></Slot>
        <Slot $w={38}><Icon width="23" height="23" viewBox="0 0 23 23"><path d={gearPath(12, 12, 10.5, 10)} fill="#e9e9e8" stroke="#c4c4c2" /><circle cx="12" cy="12" r="5" fill="#f5f5f4" stroke="#cfcfcd" /><path d="M11 12 L18 4" stroke="#b5b5b3" strokeWidth="2.4" /><path d="M16 1.5 L18 5 L22 4.5 Q22 8 18.5 8 Q15 7 16 1.5Z" fill="#bdbdbb" /><path d="M2 21 L11 12" stroke="#e07b74" strokeWidth="3.6" strokeLinecap="round" /></Icon></Slot>
        <Slot $w={36}><Icon width="24" height="24" viewBox="0 0 24 24" fill="#d9d9d8" stroke="#a3a3a1"><path d={gearPath(6, 6, 5.8, 8)} /><circle cx="6" cy="6" r="2" fill="#f2f1f0" /><path d={gearPath(16, 15, 7.6, 9)} /><circle cx="16" cy="15" r="2.8" fill="#f2f1f0" /><path d={gearPath(3.8, 20, 3.6, 4)} transform="rotate(45 3.8 20)" /><circle cx="3.8" cy="20" r="1" fill="#f2f1f0" /></Icon></Slot>
        <Rule $l={7} $r={6} />
        <Slot $w={38}><Icon width="18" height="22" viewBox="0 0 18 22"><path d="M6.8 1 Q9 -.5 11.2 1 V10 L15 8.5 L16 10 L9 17 L2 10 L3 8.5 L6.8 10Z" fill="#f07434" stroke="#ce4a10" /><path d="M1 17.5 H6 L9 19 L12 17.5 H17 V21 H1Z" fill="#ea6226" stroke="#ce4a10" /></Icon></Slot>
        <Slot $w={38}><Icon width="26" height="21" viewBox="0 0 26 21"><ellipse cx="9" cy="18.5" rx="9" ry="1.8" fill="#dddcdb" /><path d="M0 11 H7" stroke="#8a8c88" strokeWidth="2.6" /><path d="M5 8 Q8 4.5 13 5.5 V16.5 Q8 17 5 14Z" fill="#7d7f7b" stroke="#555753" /><path d="M13 8.5h4M13 13.5h4" stroke="#c4a000" strokeWidth="2.2" /><path d="M24.3 .5 Q22.5 1 22 4 V17 Q22.5 20 24.3 20.5Z" fill="#fff" stroke="#888a85" strokeWidth="1.2" /></Icon></Slot>
      </ClientBar>
      <ClientTabs>
        <ClientTab>
          <Icon width="16" height="16" viewBox="0 0 16 16" strokeWidth=".9"><circle cx="8" cy="3.3" r="2.8" fill="#f5904a" stroke="#b85c10" /><circle cx="3.3" cy="8" r="2.8" fill="#7f9fcb" stroke="#204a87" /><circle cx="12.7" cy="8" r="2.8" fill="#9ad95a" stroke="#4e9a06" /><circle cx="8" cy="12.7" r="2.8" fill="#f3e04a" stroke="#c4a000" /></Icon>
          <span>10.5.10.127</span>
          <Icon width="13" height="12" viewBox="0 0 13 12"><path d="M2 1.5 L11 10.5 M11 1.5 L2 10.5" stroke="#555" strokeWidth="4" /><path d="M2 1.5 L11 10.5 M11 1.5 L2 10.5" stroke="#6e6e6e" strokeWidth="1.6" /></Icon>
        </ClientTab>
      </ClientTabs>

      <Panel>
        <Launcher>
          <Icon width="25" height="26" viewBox="0 0 25 26"><circle cx="12.5" cy="14" r="12.3" fill="#0b4bab" /><path d="M4 12.5 Q4 10 6 10.5 L9.5 13 Q7.5 9.5 7 7.2 Q8.3 5.8 9.6 7.3 L13 12 Q12.4 8 13.4 6 Q15 5.4 15.2 7.5 L15.8 12.4 L18.8 6.8 Q20.4 6.2 20 8.2 L18.4 14 Q20 18 16.5 21 Q12 24 8 20.5 Q6.5 19.5 7 17.4 Q4 15.5 4 12.5Z" fill="#fff" /></Icon>
          Applications
        </Launcher>
        <Task $active><RvizLogo />follower.rviz* - RViz</Task>
        <Task $mr={2}>
          <Icon width="16" height="14" viewBox="0 0 16 14"><path d="M1 1 H6 L7.5 2.5 H15 V5 H1Z" fill="#eef4f8" /><rect x=".5" y="3.5" width="15" height="10" rx=".6" fill="#8fc4e6" /><path d="M.5 3.5h15v3H.5z" fill="#b9dcf1" /></Icon>
          <TaskLabel $ls={0.06}>rosbot_follower - File M…</TaskLabel>
        </Task>
        <Task>
          <Slot $w={17}><Icon width="13" height="14" viewBox="0 0 13 14"><rect x=".5" y=".5" width="12" height="9.5" rx="1" fill="#333" stroke="#c9c9c9" /><path d="M1 9 L12 3 V9.5 H1Z" fill="#555" /><path d="M5 10h3v2h2v1.5H3V12h2z" fill="#d5d5d5" /></Icon></Slot>
          <TaskLabel $ls={-0.04}>/home/husarion/Docum…</TaskLabel>
        </Task>
        <Pager>
          <Workspace $active><RvizLogo /></Workspace>
          <Workspace /><Workspace /><Workspace />
        </Pager>
        <PanelStatus>15:45<Wifi w={21} c="#c9c9c9" />husarion</PanelStatus>
      </Panel>

      <TitleBar>
        <RvizLogo $s={10.5} $w={20} $outline />
        <TitleText>follower.rviz* - RViz</TitleText>
        <TitleButtons>
          <Slot $w={22}><Icon width="10" height="10" viewBox="0 0 10 10"><path d="M5 0 L9.5 5 H6.5 V10 H3.5 V5 H.5Z" fill="#fff" stroke="#666" strokeWidth=".7" /></Icon></Slot>
          <Slot $w={22}><Icon width="8" height="10" viewBox="0 0 8 10"><rect x=".4" y="6.4" width="7.2" height="3" fill="#fff" stroke="#666" strokeWidth=".8" /></Icon></Slot>
          <Slot $w={22}><Icon width="12" height="12" viewBox="0 0 12 12" fill="none"><path d="M4.5 3.5 V1.5 H10.5 V7.5 H8.5 M1.5 4.5 H7.5 V10.5 H1.5Z" stroke="#666" strokeWidth="2.6" /><path d="M4.5 3.5 V1.5 H10.5 V7.5 H8.5 M1.5 4.5 H7.5 V10.5 H1.5Z" stroke="#fff" strokeWidth="1.2" /></Icon></Slot>
          <Slot $w={22}><Icon width="10" height="10" viewBox="0 0 10 10"><path d="M1 1 L9 9 M9 1 L1 9" stroke="#666" strokeWidth="3.4" /><path d="M1 1 L9 9 M9 1 L1 9" stroke="#fff" strokeWidth="2" /></Icon></Slot>
        </TitleButtons>
      </TitleBar>
      <MenuBar><span>File</span><span>Panels</span><span>Help</span></MenuBar>
      <ToolBar>
        <Grip />
        {tools.map(([name, w, icon, on]) => <Tool key={name} $w={w} $on={on}>{icon}{name}</Tool>)}
        <Rule $l={1} $r={13} $h={19} />
        <Slot $w={12}><Icon width="12" height="12" viewBox="0 0 12 12"><path d="M4.5 .5 H7.5 V4.5 H11.5 V7.5 H7.5 V11.5 H4.5 V7.5 H.5 V4.5 H4.5Z" fill="#8db8ea" stroke="#2f64ac" /></Icon></Slot>
        <Slot $w={21} />
        <WithDrop $w={32} $d={1}><Icon width="12" height="5" viewBox="0 0 13 5"><rect x=".5" y=".5" width="12" height="4" fill="#8db8ea" stroke="#2f64ac" /></Icon><DropMark /></WithDrop>
        <WithDrop $w={33} $d={0}><Icon width="15" height="11" viewBox="0 0 15 11"><path d="M0 5.5 Q7.5 -4 15 5.5 Q7.5 15 0 5.5Z" fill="#e6e6ea" stroke="#aaa" /><circle cx="7.5" cy="5.5" r="4" fill="#6f86c4" /><circle cx="7.5" cy="5.5" r="1.9" fill="#141c3c" /></Icon><DropMark /></WithDrop>
      </ToolBar>

      <Workarea>
        <LeftDock>
          <DockHeader>
            <Icon width="16" height="16" viewBox="0 0 16 16"><rect x=".7" y=".7" width="14.6" height="11.6" fill="#9ad39a" stroke="#111" strokeWidth="1.4" /><path d="M1.5 1.5h4v10h-4z" fill="#d98a8a" /><path d="M10.5 1.5h4v10h-4z" fill="#9a9ae6" /><path d="M6 13h4v1.5h2.5V16h-9v-1.5H6z" fill="#111" /></Icon>
            Displays<i />
          </DockHeader>
          <Tree $h={371} $split={170}>{displayRows.map((r, i) => <DisplayRow key={i} r={r} />)}</Tree>
          <SplitHandle><span /></SplitHandle>
          <HelpBox />
          <Buttons><Button>Add</Button><Button $off>Duplicate</Button><Button $off>Remove</Button><Button $off>Rename</Button></Buttons>
        </LeftDock>
        <Collapse $l={4} $r={0}><Icon width="5" height="8" viewBox="0 0 5 8"><path d="M5 0V8L0 4Z" fill="#333" /></Icon></Collapse>
        <Center>
          <Scene />
          <SplitHandle $shift={70}><span /></SplitHandle>
        </Center>
        <Collapse $l={0} $r={7}><Icon width="5" height="8" viewBox="0 0 5 8"><path d="M0 0V8L5 4Z" fill="#333" /></Icon></Collapse>
        <RightDock>
          <DockHeader>
            <Icon width="16" height="9" viewBox="0 0 16 9"><path d="M0 0 L5 3 V6 L0 9Z" fill="#4a4a4a" /><rect x="5" y=".5" width="11" height="8" rx="3" fill="#4a4a4a" /></Icon>
            Views<i />
          </DockHeader>
          <TypeRow><span>Type:</span><Select>Orbit (rviz)<Icon width="8" height="5" viewBox="0 0 8 5"><path d="M0 0H8L4 4.5Z" fill="#555" /></Icon></Select><Button $w={80}>Zero</Button></TypeRow>
          <Tree $h={419} $split={134}>
            <Row $h={14}><Slot $w={20}><Tri open /></Slot><Highlight><span>Current View</span><b>Orbit (rviz)</b></Highlight></Row>
            {viewRows.map(([n, v, tri], i) => (
              <Row key={i} $h={14}>
                <NameCell $w={135}><Slot $w={20} /><Slot $w={20}>{tri && <Tri />}</Slot><Slot $w={3} />{n}</NameCell>
                <ValueCell>{typeof v === 'string' ? v : <Check c={v.check} />}</ValueCell>
              </Row>
            ))}
          </Tree>
          <Buttons><Button>Save</Button><Button>Remove</Button><Button>Rename</Button></Buttons>
        </RightDock>
      </Workarea>
      <WindowEdge />
      <HostDock>
        {dockIcons.map(([icon, c, b, mark, top], i) => (
          <DockItem key={i}><Mark $top>{top}</Mark><Tile $c={c} $b={b}>{icon}</Tile><Mark>{mark}</Mark></DockItem>
        ))}
      </HostDock>
    </Screen>
  );
}
